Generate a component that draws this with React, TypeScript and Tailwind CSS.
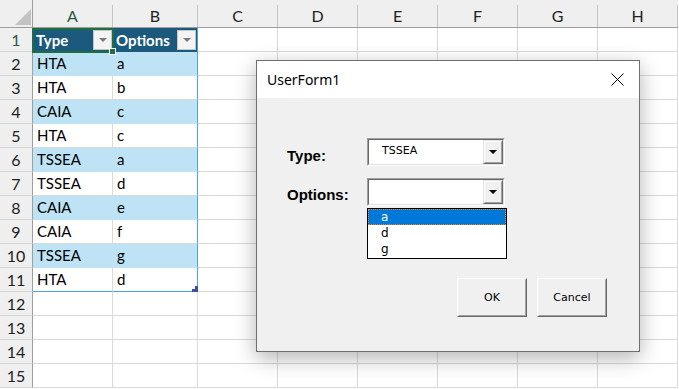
import React from "react";

const rows: [string, string][] = [
  ["HTA", "a"],
  ["HTA", "b"],
  ["CAIA", "c"],
  ["HTA", "c"],
  ["TSSEA", "a"],
  ["TSSEA", "d"],
  ["CAIA", "e"],
  ["CAIA", "f"],
  ["TSSEA", "g"],
  ["HTA", "d"],
];
const cols = ["A", "B", "C", "D", "E", "F", "G", "H"];

function FilterBtn() {
  return (
    <div className="ml-auto mr-[1px] w-[19px] h-[20px] bg-[#f4f4f4] border border-[#c6c6c6] flex items-center justify-center">
      <svg width="8" height="4" viewBox="0 0 8 4">
        <path d="M0 0 L8 0 L4 4 Z" fill="#7a7a7a" />
      </svg>
    </div>
  );
}

function Arrow() {
  return (
    <svg width="8" height="4" viewBox="0 0 8 4">
      <path d="M0 0 L8 0 L4 4 Z" fill="#000" />
    </svg>
  );
}

function Combo({ value }: { value?: string }) {
  return (
    <div className="w-[138px] h-[28px] border border-t-[#a0a0a0] border-l-[#a0a0a0] border-b-white border-r-white">
      <div className="w-full h-full border border-t-[#696969] border-l-[#696969] border-b-[#e3e3e3] border-r-[#e3e3e3] bg-white flex">
        <div className="flex-1 pl-[13px] pt-[4px] text-[11px] leading-[14px] text-black">
          {value}
        </div>
        <div className="w-[20px] h-full border border-t-[#e3e3e3] border-l-[#e3e3e3] border-b-[#696969] border-r-[#696969]">
          <div className="w-full h-full bg-[#f0f0f0] border border-t-white border-l-white border-b-[#a0a0a0] border-r-[#a0a0a0] flex items-center justify-center">
            <Arrow />
          </div>
        </div>
      </div>
    </div>
  );
}

function Button({ label }: { label: string }) {
  return (
    <div className="w-[70px] h-[39px] border border-t-white border-l-white border-b-[#696969] border-r-[#696969]">
      <div className="w-full h-full bg-[#f0f0f0] border border-t-[#f0f0f0] border-l-[#f0f0f0] border-b-[#a0a0a0] border-r-[#a0a0a0] flex items-center justify-center pt-[2px] text-[11px] text-black">
        {label}
      </div>
    </div>
  );
}

export default function App() {
  const cells: React.ReactNode[] = [];
  cells.push(
    <div
      key="corner"
      className="bg-[#efefef] border-b border-r border-[#9e9e9e] relative"
    >
      <svg
        className="absolute left-[15px] top-[9px]"
        width="16"
        height="16"
        viewBox="0 0 16 16"
      >
        <path d="M16 0 L16 16 L0 16 Z" fill="#c3c3c3" />
      </svg>
    </div>
  );
  cols.forEach((c, i) => {
    cells.push(
      <div
        key={"h" + c}
        className="bg-[#efefef] border-b border-[#9e9e9e] pt-[5px]"
      >
        <div
          className={`h-full border-r border-[#c4c4c4] flex items-center justify-center text-[16px] ${
            i === 0 ? "text-[#1f5f3f]" : "text-[#222]"
          }`}
        >
          {c}
        </div>
      </div>
    );
  });

  for (let r = 1; r <= 15; r++) {
    cells.push(
      <div
        key={"r" + r}
        className={`bg-[#efefef] border-r border-r-[#9e9e9e] border-b border-b-[#d4d4d4] flex items-center justify-center text-[16px] ${
          r === 1 ? "text-[#1f5f3f]" : "text-[#222]"
        }`}
      >
        {r}
      </div>
    );
    for (let c = 0; c < 8; c++) {
      const key = `c${r}-${c}`;
      if (r === 1 && c < 2) {
        cells.push(
          <div
            key={key}
            className={`bg-[#1b5a7c] flex items-center pl-[3px] text-white font-bold text-[15px] ${
              c === 1 ? "border-r border-[#48a6de]" : ""
            }`}
          >
            <span>{c === 0 ? "Type" : "Options"}</span>
            <FilterBtn />
          </div>
        );
      } else if (r >= 2 && r <= 11 && c < 2) {
        const banded = r % 2 === 0;
        const last = r === 11;
        cells.push(
          <div
            key={key}
            className={`flex items-center pl-[4px] text-[15px] text-black ${
              banded ? "bg-[#bde3f4]" : "bg-white"
            } ${
              c === 1
                ? "border-r border-r-[#48a6de]"
                : banded
                ? "border-r border-r-[#bde3f4]"
                : "border-r border-r-[#dadada]"
            } ${
              last
                ? "border-b border-b-[#48a6de]"
                : banded
                ? "border-b border-b-[#bde3f4]"
                : "border-b border-b-[#dadada]"
            }`}
          >
            {rows[r - 2][c]}
          </div>
        );
      } else {
        cells.push(
          <div key={key} className="bg-white border-r border-b border-[#dadada]" />
        );
      }
    }
  }

  return (
    <div className="w-[679px] h-[389px] relative overflow-hidden bg-white font-['Lato',sans-serif]">
      <div className="grid grid-cols-[33px_80px_85px_80px_80px_80px_80px_80px_80px] grid-rows-[28px_repeat(15,24px)]">
        {cells}
      </div>

      <div className="absolute left-[32px] top-[28px] w-[82px] h-[25px] border-2 border-[#1e6e42]" />
      <div className="absolute left-[109px] top-[48px] w-[7px] h-[7px] bg-[#1e6e42] border border-white" />
      <svg className="absolute left-[192px] top-[286px]" width="6" height="6" viewBox="0 0 6 6">
        <path d="M6 0 L6 6 L0 6 L0 3 L3 3 L3 0 Z" fill="#3d4db3" />
      </svg>

      <div className="absolute left-[256px] top-[60px] w-[384px] h-[292px] border border-[#6e6e6e] bg-[#f0f0f0] shadow-[0_6px_20px_rgba(0,0,0,0.3)] flex flex-col font-['DejaVu_Sans',sans-serif]">
        <div className="h-[37px] bg-white flex items-center justify-between pl-[10px] pr-[15px]">
          <span className="text-[14px] text-black font-['Noto_Sans',sans-serif]">
            UserForm1
          </span>
          <svg width="13" height="13" viewBox="0 0 13 13">
            <path d="M0.5 0.5 L12.5 12.5 M12.5 0.5 L0.5 12.5" stroke="#000" strokeWidth="1" />
          </svg>
        </div>
        <div className="flex-1 pt-[40px] pl-[30px] flex flex-col">
          <div className="flex">
            <div className="w-[80px] h-[28px] pt-[8px] flex items-center text-[15px] font-bold text-black font-['Liberation_Sans',sans-serif]">
              Type:
            </div>
            <Combo value="TSSEA" />
          </div>
          <div className="flex mt-[12px] relative">
            <div className="w-[80px] h-[28px] pt-[6px] flex items-center text-[15px] font-bold text-black font-['Liberation_Sans',sans-serif]">
              Options:
            </div>
            <Combo />
            <div className="absolute left-[80px] top-[30px] w-[140px] h-[51px] bg-white border border-black flex flex-col text-[12px] z-10">
              <div className="h-[16px] bg-[#0078d7] text-white border border-dotted border-[#e08a30] pl-[12px] leading-[14px]">
                a
              </div>
              <div className="h-[16px] pl-[13px] leading-[17px] text-black">d</div>
              <div className="h-[16px] pl-[13px] leading-[17px] text-black">g</div>
            </div>
          </div>
          <div className="flex justify-end gap-[10px] pr-[32px] mt-[72px]">
            <Button label="OK" />
            <Button label="Cancel" />
          </div>
        </div>
      </div>
    </div>
  );
}
